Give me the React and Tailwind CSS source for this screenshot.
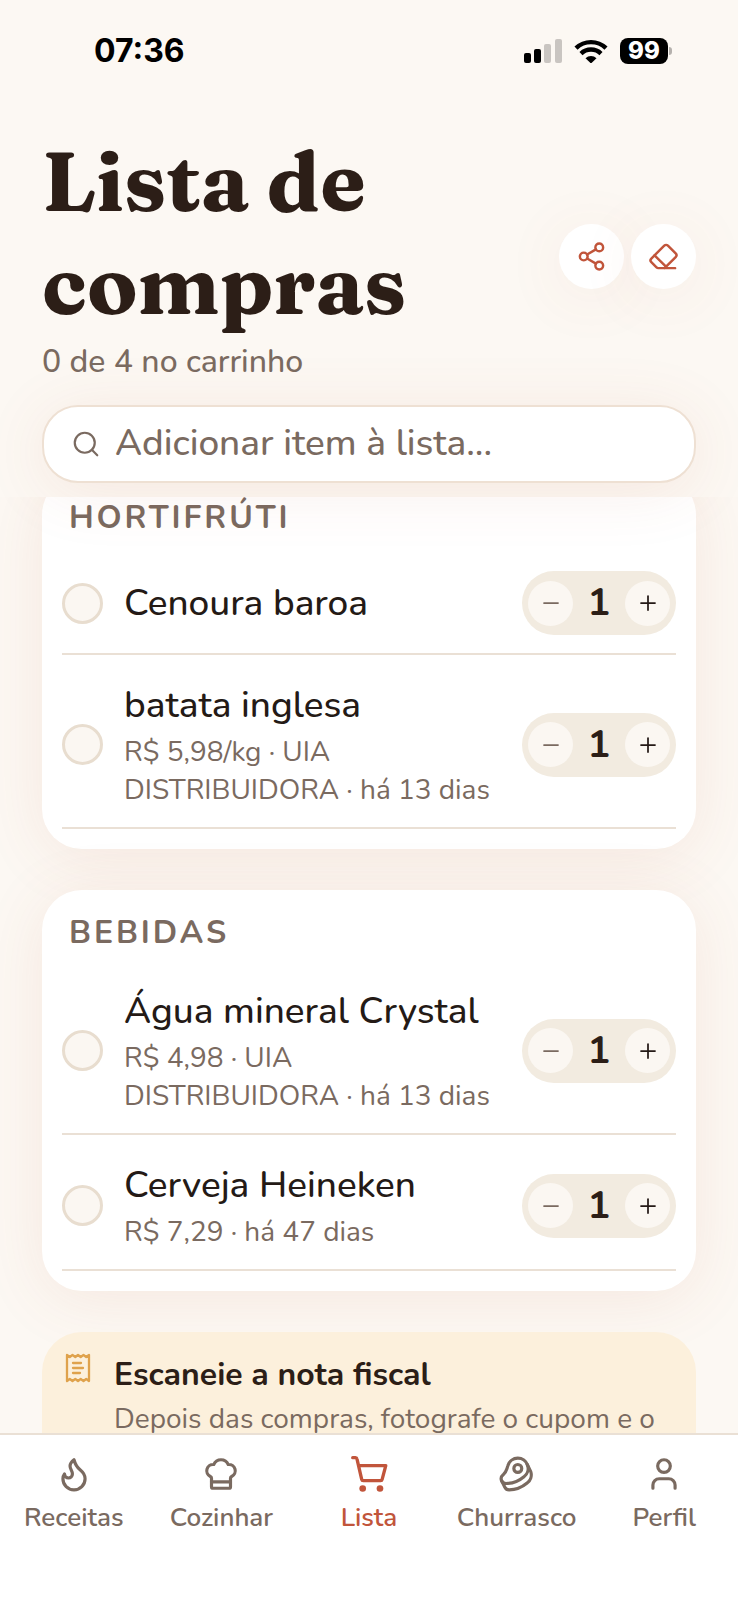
import { useLayoutEffect, useRef, useState } from "react";
import { ChefHat, Eraser, Flame, Minus, Plus, Search, Share2, User } from "lucide-react";

const initialSections = [
  {
    title: "HORTIFRÚTI",
    items: [
      { id: "cenoura", name: "Cenoura baroa", qty: 1 },
      {
        id: "batata",
        name: "batata inglesa",
        detail: "R$ 5,98/kg · UIA DISTRIBUIDORA · há 13 dias",
        qty: 1
      }
    ]
  },
  {
    title: "BEBIDAS",
    items: [
      {
        id: "agua",
        name: "Água mineral Crystal",
        detail: "R$ 4,98 · UIA DISTRIBUIDORA · há 13 dias",
        qty: 1
      },
      { id: "cerveja", name: "Cerveja Heineken", detail: "R$ 7,29 · há 47 dias", qty: 1 }
    ]
  }
]

// ---- Icons ----
const CartIcon = ({ className, strokeWidth }) => (
  <svg
    className={className}
    viewBox="0 0 24 24"
    fill="none"
    stroke="currentColor"
    strokeWidth={strokeWidth}
    strokeLinecap="round"
    strokeLinejoin="round"
    aria-hidden="true"
  >
    <path d="M2.2 2.2h1.6a1 1 0 0 1 1 .8l2.8 12.2a1 1 0 0 0 1 .8h10.3a1 1 0 0 0 1-.8L22.1 7H5.8" />
    <circle cx="8.2" cy="20.7" r="2" fill="currentColor" stroke="none" />
    <circle cx="18.6" cy="20.7" r="2" fill="currentColor" stroke="none" />
  </svg>
)

const SteakIcon = ({ className, strokeWidth }) => (
  <svg
    className={className}
    viewBox="0 0 24 24"
    fill="none"
    stroke="currentColor"
    strokeWidth={strokeWidth}
    strokeLinecap="round"
    strokeLinejoin="round"
    aria-hidden="true"
  >
    <circle cx="12.5" cy="8.5" r="2.5" />
    <path d="M12.5 2a6.5 6.5 0 0 0-6.22 4.6c-1.1 3.13-.78 3.9-3.18 6.08A3 3 0 0 0 5 18c4 0 8.4-1.8 11.4-4.3A6.5 6.5 0 0 0 12.5 2Z" />
    <path d="m18.5 6 2.19 4.5a6.48 6.48 0 0 1-2.29 7.2C15.4 20.2 11 22 7 22a3 3 0 0 1-2.68-1.66L2.4 16.5" />
  </svg>
)

const ReceiptIcon = () => (
  <svg
    className="h-8 w-7 shrink-0 text-[#dfa24c]"
    viewBox="0 0 28 32"
    fill="none"
    stroke="currentColor"
    strokeWidth="2.3"
    strokeLinecap="round"
    strokeLinejoin="round"
    aria-hidden="true"
  >
    <path d="M3 3l2.8 2 2.7-2 2.8 2L14 3l2.7 2 2.8-2 2.7 2L25 3v26l-2.8-2-2.7 2-2.8-2-2.7 2-2.7-2-2.8 2-2.7-2L3 29Z" />
    <path d="M9 11h8M9 16h10M9 21h7" />
  </svg>
)

const tabs = [
  { label: "Receitas", Icon: Flame },
  { label: "Cozinhar", Icon: ChefHat },
  { label: "Lista", Icon: CartIcon, active: true },
  { label: "Churrasco", Icon: SteakIcon },
  { label: "Perfil", Icon: User }
]

// ---- Status bar ----
const StatusBar = () => (
  <div className="flex items-center justify-between pt-[33px] pr-[66px] pl-[94px] font-['Inter',sans-serif]">
    <span className="text-[32px] leading-9 font-bold text-black">07:36</span>
    <div className="flex items-center gap-3">
      <svg className="h-6 w-[38px]" viewBox="0 0 38 24" aria-hidden="true">
        <rect x="0" y="14" width="7" height="10" rx="2" fill="#000" />
        <rect x="10" y="10" width="7" height="14" rx="2" fill="#000" />
        <rect x="20" y="5" width="7" height="19" rx="2" fill="#c9c5c1" />
        <rect x="31" y="0" width="7" height="24" rx="2" fill="#c9c5c1" />
      </svg>
      <svg className="h-6 w-[34px]" viewBox="0 0 34 24" aria-hidden="true">
        <g fill="none" stroke="#000" strokeWidth="4.4">
          <path d="M2 9.2a21.5 21.5 0 0 1 30 0" />
          <path d="M7 14.6a14.4 14.4 0 0 1 20 0" />
        </g>
        <path d="M11.5 19.2a8.2 8.2 0 0 1 11 0L17 24.5Z" fill="#000" />
      </svg>
      <div className="flex items-center gap-px">
        <span className="flex h-[26px] w-12 items-center justify-center rounded-lg bg-black text-[24px] font-extrabold text-white">
          99
        </span>
        <span className="h-2 w-[3px] rounded-r-full bg-[#b5b1ad]" />
      </div>
    </div>
  </div>
)

// ---- Single row of the list ----
const ItemRow = ({ item, onQty }) => (
  <li className="flex items-center gap-[21px] border-b-2 border-[#eae0d5] py-[18px]">
    <input
      id={item.id}
      type="checkbox"
      className="size-[41px] shrink-0 appearance-none rounded-full border-[3px] border-[#e8ddcf] bg-[#fbf7f2] checked:bg-[#c1553b]"
    />
    <label htmlFor={item.id} className="min-w-0 flex-1">
      <span className="block text-[37px] leading-[50px] font-medium text-[#241a16]">
        {item.name}
      </span>
      {item.detail && (
        <span className="mt-[3px] block text-[28px] leading-[38px] text-[#7a6a60]">
          {item.detail}
        </span>
      )}
    </label>
    <div className="flex h-16 w-[154px] shrink-0 items-center justify-between rounded-full bg-[#f2ebe0] px-1.5">
      <button
        type="button"
        aria-label="Diminuir quantidade"
        onClick={() => onQty(item.id, -1)}
        className="flex size-[45px] items-center justify-center rounded-full bg-[#fbf7f2] text-[#7a6a60]"
      >
        <Minus className="size-6" strokeWidth={1.75} />
      </button>
      <span className="text-[38px] leading-none font-bold text-[#2c1e17]">{item.qty}</span>
      <button
        type="button"
        aria-label="Aumentar quantidade"
        onClick={() => onQty(item.id, 1)}
        className="flex size-[45px] items-center justify-center rounded-full bg-[#fbf7f2] text-[#241a16]"
      >
        <Plus className="size-6" strokeWidth={1.75} />
      </button>
    </div>
  </li>
)

const App = () => {
  const [sections, setSections] = useState(initialSections)
  const listRef = useRef(null)

  // list opens slightly scrolled under the header
  useLayoutEffect(() => {
    if (listRef.current) listRef.current.scrollTop = 22
  }, [])

  const changeQty = (id, delta) => {
    setSections((prev) =>
      prev.map((section) => ({
        ...section,
        items: section.items.map((item) =>
          item.id === id ? { ...item, qty: Math.max(1, item.qty + delta) } : item
        )
      }))
    )
  }

  return (
    <div className="flex h-screen flex-col bg-[#fcf8f3] font-['Nunito','Lato',sans-serif]">
      {/* ---- HEADER ---- */}
      <header className="relative z-10 shrink-0">
        <StatusBar />

        <div className="px-[42px] pt-[61px] pb-[14px]">
          <div className="flex items-center justify-between gap-4">
            <div>
              <h1 className="font-['Fraunces','DejaVu_Serif',serif] text-[83px] leading-[103px] font-bold text-[#2c1e17]">
                Lista de compras
              </h1>
              <p className="mt-1 text-[32px] leading-[43px] font-medium text-[#7a6a60]">
                0 de 4 no carrinho
              </p>
            </div>
            <div className="flex shrink-0 gap-[7px] text-[#c1553b]">
              <button
                type="button"
                aria-label="Compartilhar"
                className="flex size-[65px] items-center justify-center rounded-full bg-white shadow-[0_8px_64px_rgba(190,90,60,0.08)]"
              >
                <Share2 className="size-[31px]" strokeWidth={1.9} />
              </button>
              <button
                type="button"
                aria-label="Limpar lista"
                className="flex size-[65px] items-center justify-center rounded-full bg-white shadow-[0_8px_64px_rgba(190,90,60,0.08)]"
              >
                <Eraser className="size-[31px]" strokeWidth={1.9} />
              </button>
            </div>
          </div>

          <div className="mt-[22px] flex h-[78px] items-center gap-[14px] rounded-[36px] border-2 border-[#eee0d3] bg-white px-[27px] text-[#7a6a60] shadow-[0_8px_64px_rgba(190,90,60,0.10)]">
            <Search className="size-[30px] shrink-0" strokeWidth={1.75} />
            <input
              type="text"
              aria-label="Adicionar item à lista"
              placeholder="Adicionar item à lista..."
              className="min-w-0 flex-1 bg-transparent text-[37px] font-medium outline-none placeholder:text-[#7a6a60]"
            />
          </div>
        </div>
      </header>

      {/* ---- LIST ---- */}
      <main
        ref={listRef}
        className="min-h-0 flex-1 space-y-[41px] overflow-y-auto px-[42px] pb-10 [scrollbar-width:none]"
      >
        {sections.map((section) => (
          <section
            key={section.title}
            className="rounded-[40px] bg-white p-5 shadow-[0_8px_64px_rgba(190,90,60,0.10)]"
          >
            <h2 className="px-[7px] pb-3 text-[32px] leading-[46px] font-bold tracking-[0.09em] text-[#7a6a60]">
              {section.title}
            </h2>
            <ul className="flex flex-col gap-[7px]">
              {section.items.map((item) => (
                <ItemRow key={item.id} item={item} onQty={changeQty} />
              ))}
            </ul>
          </section>
        ))}

        {/* receipt hint */}
        <section className="relative flex gap-[22px] rounded-[40px] bg-[#fcf0dc] px-[22px] py-5">
          <ReceiptIcon />
          <div className="min-w-0 flex-1">
            <h2 className="text-[32px] leading-[46px] font-bold text-[#2c1e17]">
              Escaneie a nota fiscal
            </h2>
            <p className="mt-0.5 text-[28px] leading-[38px] text-[#7a6a60]">
              Depois das compras, fotografe o cupom e o app atualiza os preços.
            </p>
          </div>
        </section>
      </main>

      {/* ---- BOTTOM NAV ---- */}
      <nav className="z-10 grid shrink-0 grid-cols-5 border-t-2 border-[#eae0d5] bg-white pt-5 pb-16">
        {tabs.map(({ label, Icon, active }) => (
          <a
            key={label}
            href="#"
            aria-current={active ? "page" : undefined}
            className={`flex flex-col items-center gap-[7px] text-[26px] leading-9 font-semibold ${
              active ? "text-[#c1553b]" : "text-[#7a6a60]"
            }`}
          >
            <Icon className={active ? "size-[38px] scale-105" : "size-[38px]"} strokeWidth={2} />
            {label}
          </a>
        ))}
      </nav>
    </div>
  )
}

export default App
